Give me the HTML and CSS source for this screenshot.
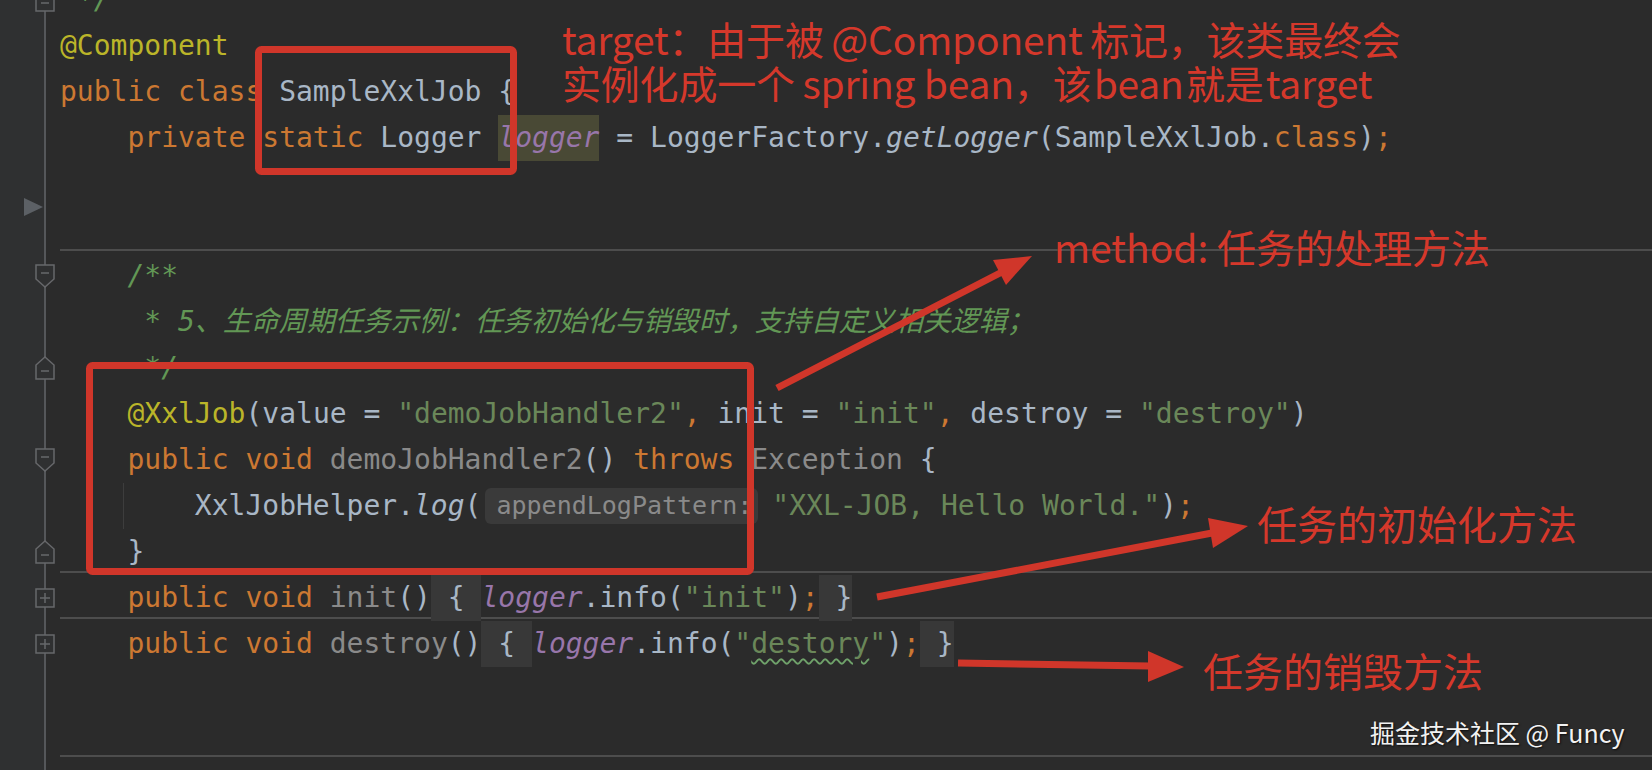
FILE: index.html
```html
<!DOCTYPE html>
<html lang="zh-CN">
<head>
    <meta charset="UTF-8">
    <meta name="viewport" content="width=device-width, initial-scale=1.0">
    <title>SampleXxlJob</title>
    <link rel="stylesheet" href="styles.css">
</head>
<body>
    <div class="editor">
        <!-- Gutter with fold markers -->
        <div class="gutter">
            <div class="g"><svg class="mk" viewBox="0 0 20 24" width="20" height="24"><path d="M10 1L19 9V23H1V9Z"/><path d="M6 15H14"/></svg></div>
            <div class="g"></div>
            <div class="g"></div>
            <div class="g"></div>
            <div class="g run"><svg width="20" height="18" viewBox="0 0 20 18"><path d="M0 0L19 9L0 18Z" fill="#5c6065"/></svg></div>
            <div class="g"></div>
            <div class="g"><svg class="mk" viewBox="0 0 20 24" width="20" height="24"><path d="M1 1H19V15L10 23L1 15Z"/><path d="M6 9H14"/></svg></div>
            <div class="g"></div>
            <div class="g"><svg class="mk" viewBox="0 0 20 24" width="20" height="24"><path d="M10 1L19 9V23H1V9Z"/><path d="M6 15H14"/></svg></div>
            <div class="g"></div>
            <div class="g"><svg class="mk" viewBox="0 0 20 24" width="20" height="24"><path d="M1 1H19V15L10 23L1 15Z"/><path d="M6 9H14"/></svg></div>
            <div class="g"></div>
            <div class="g"><svg class="mk" viewBox="0 0 20 24" width="20" height="24"><path d="M10 1L19 9V23H1V9Z"/><path d="M6 15H14"/></svg></div>
            <div class="g"><svg class="mk" viewBox="0 0 20 20" width="20" height="20"><rect x="1" y="1" width="18" height="18"/><path d="M5 10H15M10 5V15"/></svg></div>
            <div class="g"><svg class="mk" viewBox="0 0 20 20" width="20" height="20"><rect x="1" y="1" width="18" height="18"/><path d="M5 10H15M10 5V15"/></svg></div>
            <div class="g"></div>
            <div class="g"></div>
            <div class="g"></div>
        </div>

        <!-- Source -->
        <div class="code">
            <div class="ln"> <span class="cm">*/</span></div>
            <div class="ln"><span class="an">@Component</span></div>
            <div class="ln"><span class="kw">public class </span>SampleXxlJob {</div>
            <div class="ln">    <span class="kw">private static </span>Logger <span class="fld hl">logger</span> = LoggerFactory.<i>getLogger</i>(SampleXxlJob.<span class="kw">class</span>)<span class="kw">;</span></div>
            <div class="ln"></div>
            <div class="ln sep"></div>
            <div class="ln">    <span class="cm">/**</span></div>
            <div class="ln">    <span class="cm"> * 5、生命周期任务示例：任务初始化与销毁时，支持自定义相关逻辑；</span></div>
            <div class="ln">    <span class="cm"> */</span></div>
            <div class="ln">    <span class="an">@XxlJob</span>(value = <span class="str">"demoJobHandler2"</span><span class="kw">, </span>init = <span class="str">"init"</span><span class="kw">, </span>destroy = <span class="str">"destroy"</span>)</div>
            <div class="ln">    <span class="kw">public void </span><span class="un">demoJobHandler2</span>() <span class="kw">throws </span><span class="un">Exception</span> {</div>
            <div class="ln guide">        XxlJobHelper.<i>log</i>(<span class="hint">appendLogPattern:</span><span class="str">"XXL-JOB, Hello World."</span>)<span class="kw">;</span></div>
            <div class="ln sep">    }</div>
            <div class="ln sep">    <span class="kw">public void </span><span class="un">init</span>()<span class="fold"> { </span><span class="fld">logger</span>.info(<span class="str">"init"</span>)<span class="kw">;</span><span class="fold"> }</span></div>
            <div class="ln">    <span class="kw">public void </span><span class="un">destroy</span>()<span class="fold"> { </span><span class="fld">logger</span>.info(<span class="str">"<span class="typo">destory</span>"</span>)<span class="kw">;</span><span class="fold"> }</span></div>
            <div class="ln"></div>
            <div class="ln sep"></div>
            <div class="ln">    <span class="cm">/**</span></div>
        </div>

        <!-- Red markup drawn over the screenshot -->
        <svg class="marks" width="1652" height="770" viewBox="0 0 1652 770">
            <g fill="none" stroke="#d0362a" stroke-width="7">
                <rect x="258.5" y="49.5" width="255" height="122" rx="3"/>
                <rect x="89.5" y="365.5" width="661" height="206" rx="3"/>
                <line x1="777" y1="388" x2="1002" y2="272"/>
                <line x1="877" y1="597" x2="1212" y2="533"/>
                <line x1="958" y1="663" x2="1150" y2="666"/>
            </g>
            <g fill="#d0362a">
                <polygon points="1032,256 1006,285 993,260"/>
                <polygon points="1248,526 1213,548 1208,518"/>
                <polygon points="1184,667 1148,682 1148,651"/>
            </g>
        </svg>

        <div class="note n1">target：由于被&thinsp;@Component&thinsp;标记，该类最终会<br>实例化成一个&thinsp;spring bean，该&#8202;bean&#8202;就是&#8202;target</div>
        <div class="note n2">method: 任务的处理方法</div>
        <div class="note n3">任务的初始化方法</div>
        <div class="note n4">任务的销毁方法</div>
        <div class="wm">掘金技术社区 @ Funcy</div>
    </div>
</body>
</html>
```

FILE: styles.css
```css
/* Darcula-like editor */
body {
    margin: 0;
    background-color: #2b2b2b;
    overflow: hidden;
}

.editor {
    position: relative;
    display: flex;
    width: 1652px;
    height: 770px;
    overflow: hidden;
    background-color: #2b2b2b;
}

.gutter {
    flex: none;
    width: 60px;
    margin-top: -23px;
    background:
        linear-gradient(#55575a, #55575a) no-repeat 44px 0 / 2px 100%,
        linear-gradient(#2f3031, #2f3031) no-repeat 0 0 / 45px 100%;
}

.g {
    height: 46px;
    display: flex;
    align-items: center;
}

.g svg {
    margin-left: 35px;
}

.g.run {
    align-items: flex-start;
}

.g.run svg {
    margin-left: 24px;
    margin-top: 37px;
}

.mk {
    fill: #2f3031;
    stroke: #67686b;
    stroke-width: 1.5;
}

.code {
    flex: 1;
    margin-top: -23px;
    font-family: "DejaVu Sans Mono", "Noto Sans CJK SC", monospace;
    font-size: 28px;
    color: #a9b7c6;
}

.ln {
    height: 46px;
    line-height: 46px;
    white-space: pre;
}

/* method separator sits on the bottom edge of the line above it */
.sep {
    background: linear-gradient(#4d4d4d, #4d4d4d) no-repeat 0 calc(100% - 2px) / 100% 2px;
}

.guide {
    background: linear-gradient(#3d3d3d, #3d3d3d) no-repeat 63px 0 / 1px 100%;
}

.kw { color: #cc7832; }
.an { color: #bbb529; }
.str { color: #6a8759; }
.un { color: #8a8a8a; }
.cm { color: #629755; font-style: italic; }
.fld { color: #9876aa; font-style: italic; }
.hl { background-color: #494935; display: inline-block; }

.fold {
    display: inline-block;
    height: 46px;
    vertical-align: top;
    background-color: #383838;
}

.hint {
    display: inline-block;
    vertical-align: top;
    height: 36px;
    line-height: 36px;
    margin: 5px 14px 0 4px;
    padding: 0 6px 0 11px;
    font-size: 25px;
    color: #8a8a8a;
    background-color: #3a3a3a;
    border-radius: 6px;
}

.typo {
    text-decoration: underline wavy #6fa26a;
    text-underline-offset: 5px;
    text-decoration-thickness: 1.5px;
}

/* annotations */
.marks {
    position: absolute;
    top: 0;
    left: 0;
    pointer-events: none;
}

.note {
    position: absolute;
    font-family: "Noto Sans CJK SC", sans-serif;
    color: #d5382b;
    white-space: nowrap;
    line-height: 44px;
    font-size: 39px;
}

.n1 { left: 562px; top: 16px; letter-spacing: -0.2px; }
.n2 { left: 1054px; top: 224px; }
.n3 { left: 1257px; top: 501px; font-size: 40px; }
.n4 { left: 1203px; top: 648px; font-size: 40px; }

.wm {
    position: absolute;
    left: 1370px;
    top: 717px;
    font-family: "Noto Sans CJK SC", sans-serif;
    font-size: 25px;
    line-height: 30px;
    color: #f2f2f2;
    text-shadow: 1px 1px 2px rgba(0, 0, 0, 0.7);
    white-space: nowrap;
}
```
